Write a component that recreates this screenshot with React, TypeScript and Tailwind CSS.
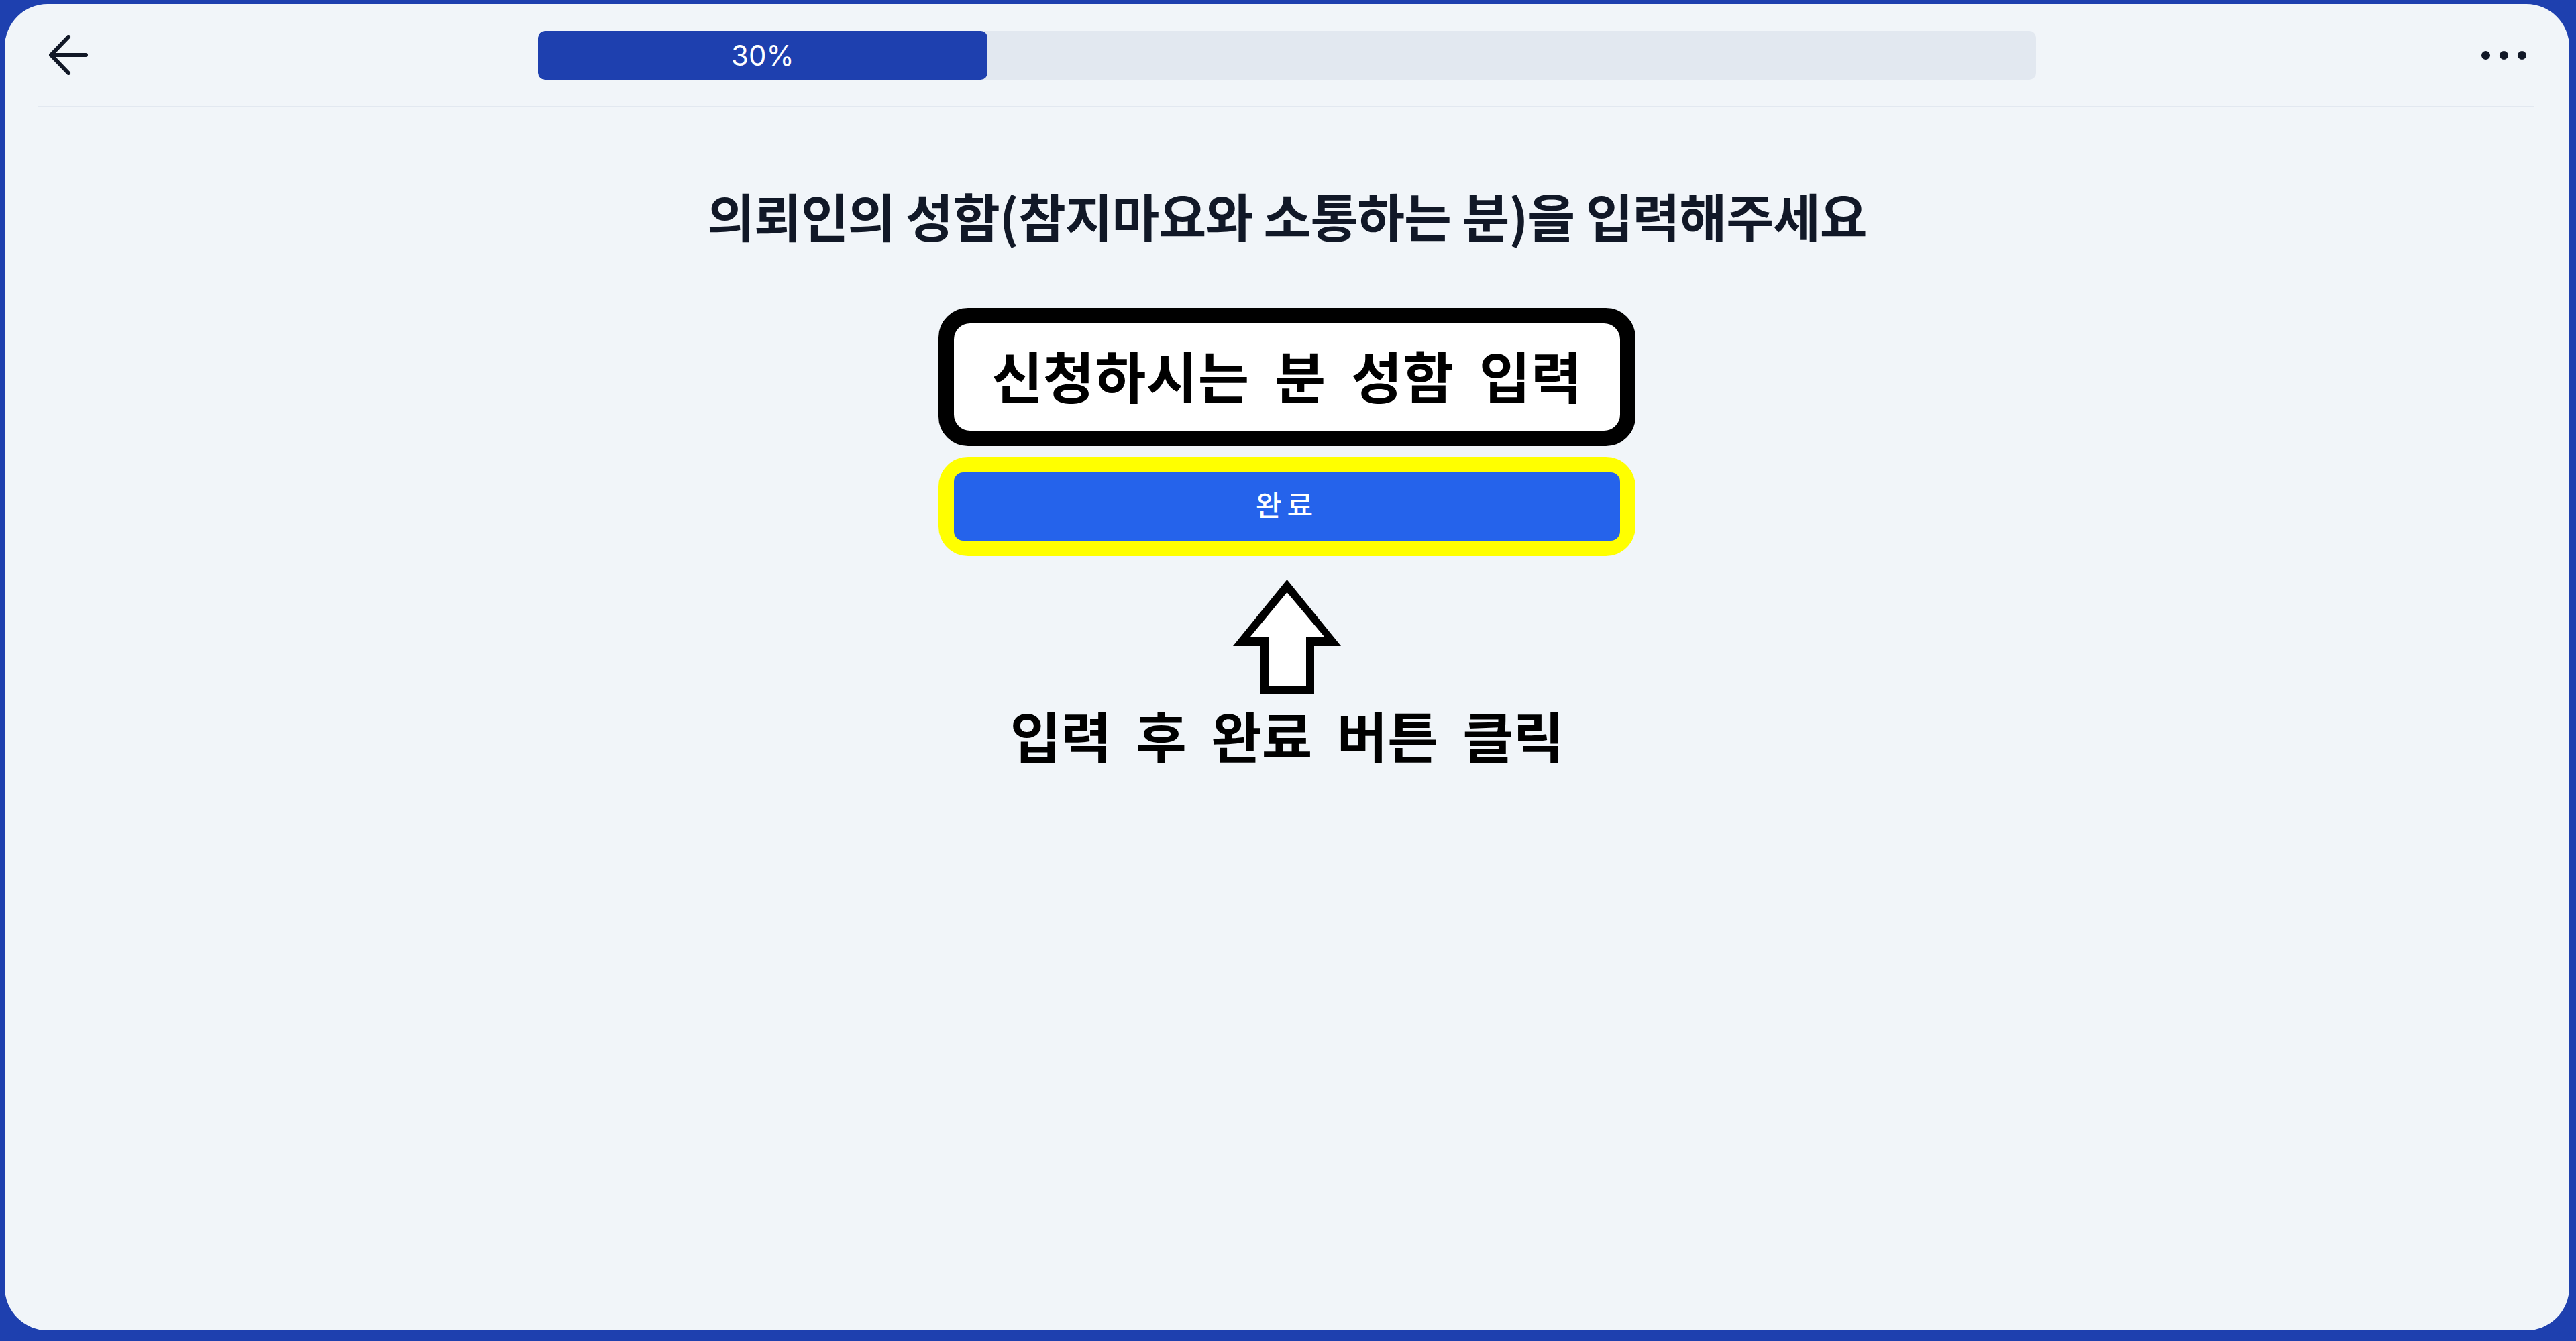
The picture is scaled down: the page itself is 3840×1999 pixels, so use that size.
import React from "react";

const KR = "font-['Noto_Sans_CJK_KR','Noto_Sans',sans-serif]";

function BackArrow() {
  return (
    <svg width="58" height="60" viewBox="0 0 58 60" fill="none" stroke="#111827" strokeWidth="6" strokeLinecap="round" strokeLinejoin="round">
      <path d="M29 3 L3 30 L29 57" />
      <path d="M3 30 H55" />
    </svg>
  );
}

function UpArrow() {
  return (
    <svg width="161" height="170" viewBox="0 0 161 170">
      <polygon points="80.5,0 161,99 121,99 121,170 41,170 41,99 0,99" fill="#000" />
      <polygon points="80.5,19 136,85 109,85 109,159 53,159 53,85 26,85" fill="#fff" />
    </svg>
  );
}

export default function App() {
  const progress = 30;

  return (
    <div className="h-screen w-full bg-[#1e40af] pt-[6px] pl-[7px] pr-[10px] pb-[16px] flex">
      <div className="flex-1 flex flex-col bg-[#f1f5f9] rounded-[64px] overflow-hidden">
        {/* header */}
        <div className="ml-[50px] mr-[52px] h-[154px] border-b-2 border-[#e2e8f0] flex items-center">
          <div className="w-[745px] pl-[16px] flex items-center">
            <BackArrow />
          </div>
          <div className="w-[2233px] h-[73px] bg-[#e2e8f0] rounded-[10px] overflow-hidden">
            <div
              className="h-full bg-[#1e40af] rounded-[10px] flex items-center justify-center text-white text-[42px] font-['Inter',sans-serif]"
              style={{ width: `${progress}%` }}
            >
              {progress}%
            </div>
          </div>
          <div className="flex-1 flex justify-end items-center gap-[14px] pr-[12px]">
            <span className="w-[13px] h-[13px] rounded-full bg-[#111827]" />
            <span className="w-[13px] h-[13px] rounded-full bg-[#111827]" />
            <span className="w-[13px] h-[13px] rounded-full bg-[#111827]" />
          </div>
        </div>

        {/* body */}
        <div className="flex flex-col items-center">
          <h1 className={`${KR} mt-[116px] h-[90px] leading-[90px] text-[77px] font-bold tracking-[-1px] text-[#111827]`}>
            의뢰인의 성함(참지마요와 소통하는 분)을 입력해주세요
          </h1>

          <div className="mt-[93px] w-[1039px] h-[206px] border-[23px] border-black rounded-[44px] bg-black">
            <div className={`${KR} w-full h-full pb-[8px] bg-white rounded-[24px] flex items-center justify-center text-[83px] font-bold tracking-[0.5px] [word-spacing:18px] text-black`}>
              신청하시는 분 성함 입력
            </div>
          </div>

          <div className="mt-[16px] w-[1039px] h-[148px] p-[23px] bg-[#ffff00] rounded-[44px]">
            <button className={`${KR} w-full h-full pb-[10px] bg-[#2563eb] rounded-[14px] text-white text-[42px] font-medium tracking-[8px] flex items-center justify-center`}>
              완료
            </button>
          </div>

          <div className="mt-[35px]">
            <UpArrow />
          </div>

          <p className={`${KR} mt-[13px] h-[96px] leading-[96px] text-[82px] font-bold tracking-[0px] [word-spacing:18px] text-black`}>
            입력 후 완료 버튼 클릭
          </p>
        </div>
      </div>
    </div>
  );
}
